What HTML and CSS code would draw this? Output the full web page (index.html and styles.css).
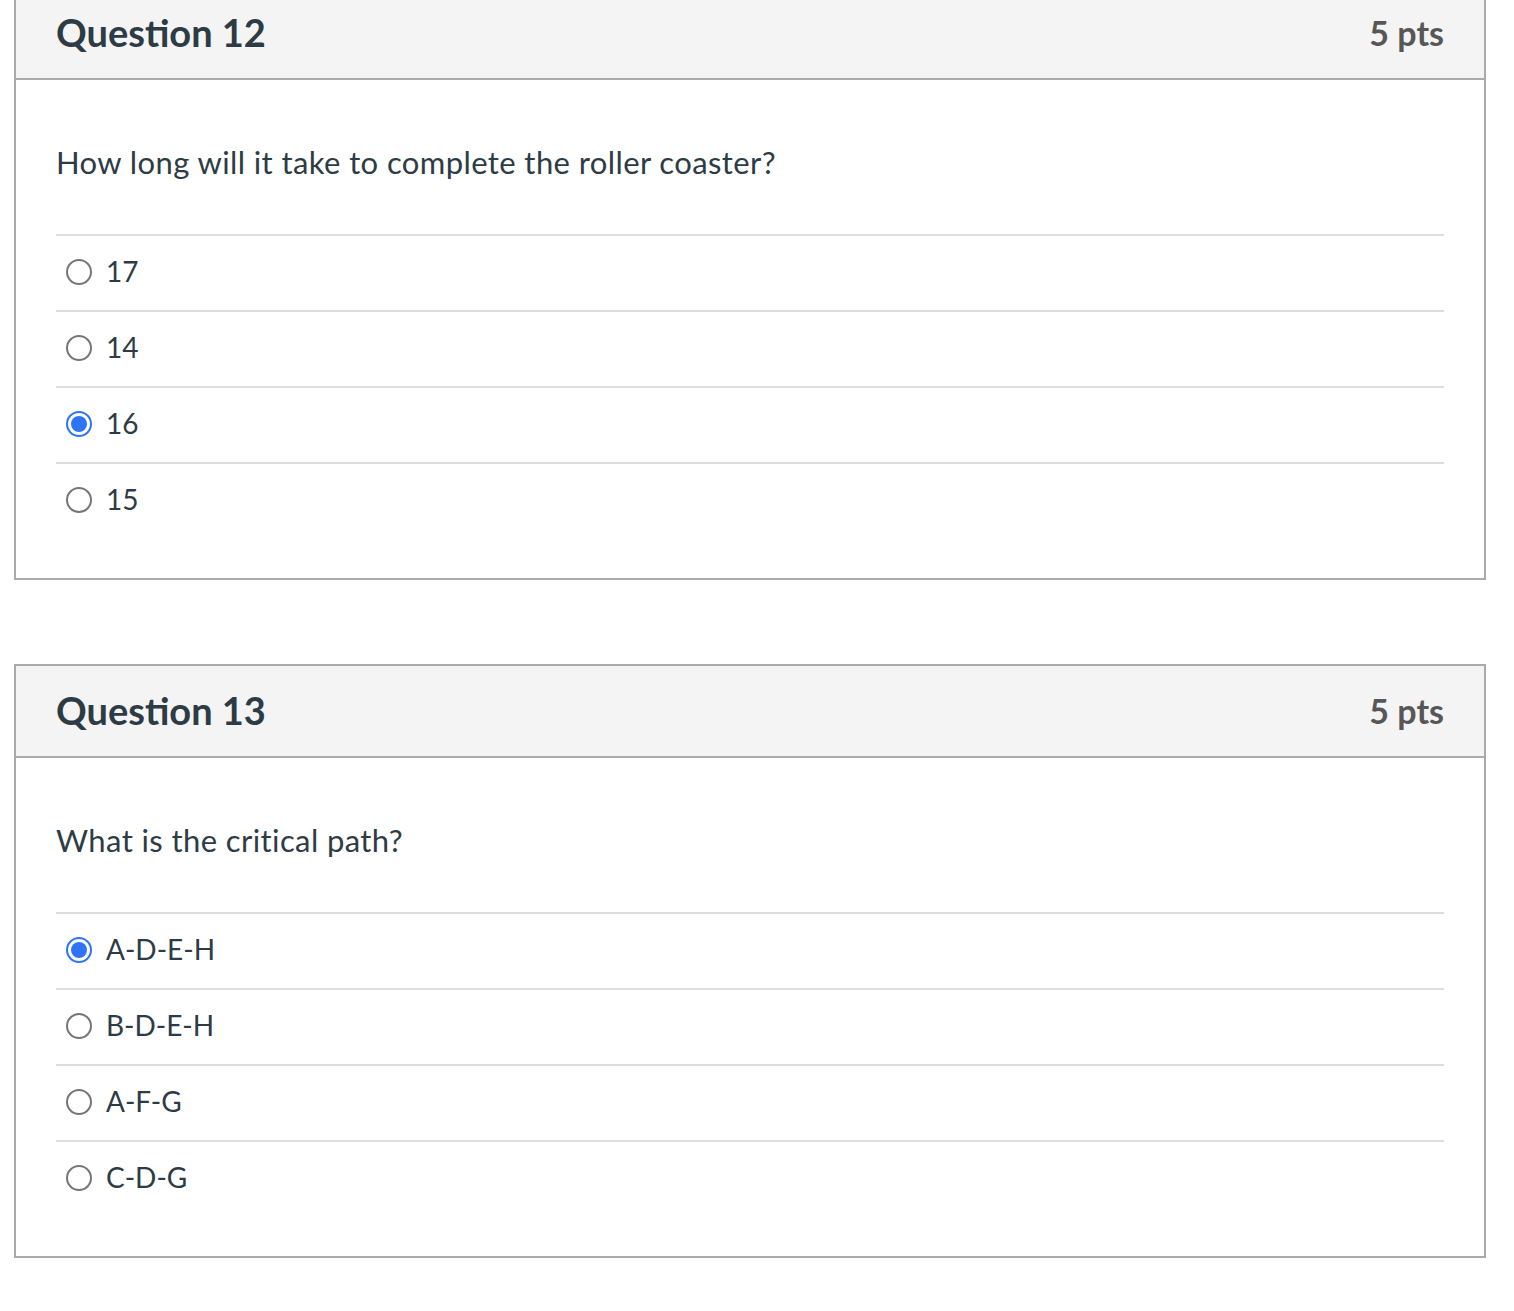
FILE: index.html
```html
<!DOCTYPE html>
<html>
<head>
<meta charset="utf-8">
<link rel="stylesheet" href="styles.css">
</head>
<body>
<div class="page">
  <div class="card">
    <div class="header">
      <h2 class="title">Question 12</h2>
      <span class="pts">5 pts</span>
    </div>
    <div class="body">
      <p class="qtext">How long will it take to complete the roller coaster?</p>
      <div class="answers">
        <div class="answer"><span class="radio"></span><span class="label">17</span></div>
        <div class="answer"><span class="radio"></span><span class="label">14</span></div>
        <div class="answer"><span class="radio checked"></span><span class="label">16</span></div>
        <div class="answer"><span class="radio"></span><span class="label">15</span></div>
      </div>
    </div>
  </div>
  <div class="card">
    <div class="header">
      <h2 class="title">Question 13</h2>
      <span class="pts">5 pts</span>
    </div>
    <div class="body">
      <p class="qtext">What is the critical path?</p>
      <div class="answers">
        <div class="answer"><span class="radio checked"></span><span class="label">A-D-E-H</span></div>
        <div class="answer"><span class="radio"></span><span class="label">B-D-E-H</span></div>
        <div class="answer"><span class="radio"></span><span class="label">A-F-G</span></div>
        <div class="answer"><span class="radio"></span><span class="label">C-D-G</span></div>
      </div>
    </div>
  </div>
</div>
</body>
</html>
```
FILE: styles.css
```css
html, body {
  margin: 0;
  padding: 0;
  background: #ffffff;
}
body {
  font-family: Lato, "Open Sans", "Liberation Sans", sans-serif;
  color: #2d3b45;
}
.page {
  margin-top: -14px;
  padding: 0 28px 0 14px;
  display: flex;
  flex-direction: column;
  gap: 84px;
}
.card {
  border: 2px solid #aaaaaa;
  background: #fff;
}
.header {
  box-sizing: border-box;
  height: 92px;
  background: #f4f4f4;
  border-bottom: 2px solid #aaaaaa;
  padding: 0 40px 2px;
  display: flex;
  align-items: center;
  justify-content: space-between;
}
.title {
  margin: 0;
  font-size: 38px;
  font-weight: 700;
  color: #2d3b45;
}
.pts {
  font-size: 34px;
  font-weight: 700;
  color: #575757;
}
.body {
  padding: 56px 40px 40px;
}
.qtext {
  margin: 0 0 46px;
  font-size: 31px;
  letter-spacing: 0.4px;
  line-height: 52px;
}
.answers {
  display: flex;
  flex-direction: column;
}
.answer {
  border-top: 2px solid #dddddd;
  height: 74px;
  display: flex;
  align-items: center;
  padding-left: 10px;
  gap: 14px;
}
.radio {
  width: 26px;
  height: 26px;
  box-sizing: border-box;
  border: 2px solid #767676;
  border-radius: 50%;
  flex: none;
  position: relative;
  top: -1px;
}
.radio.checked {
  border-color: #2f74f5;
}
.radio.checked::after {
  content: "";
  position: absolute;
  left: 3px;
  top: 3px;
  width: 16px;
  height: 16px;
  border-radius: 50%;
  background: #2f74f5;
}
.label {
  font-size: 28px;
  padding-bottom: 5px;
}
```
